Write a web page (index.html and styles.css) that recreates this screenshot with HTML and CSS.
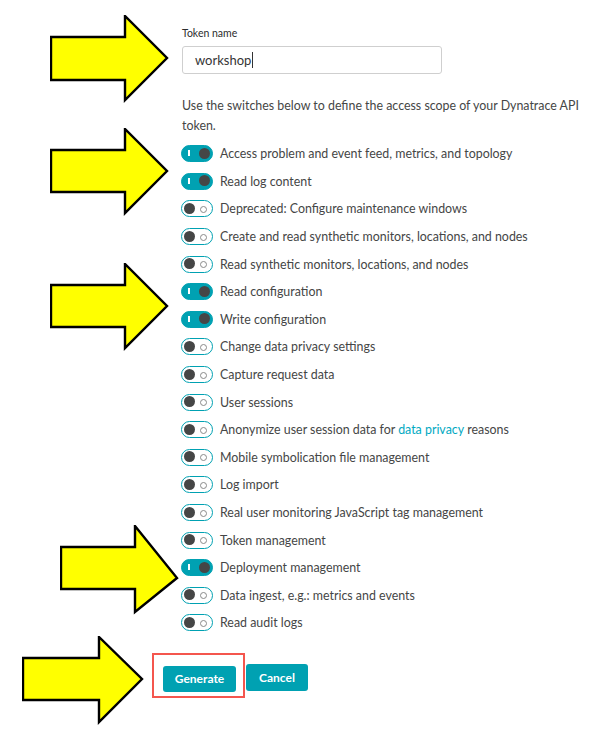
FILE: index.html
```html
<!DOCTYPE html>
<html>
<head>
<meta charset="utf-8">
<link rel="stylesheet" href="styles.css">
</head>
<body>
<div class="page">
  <div class="form">
    <label class="label">Token name</label>
    <div class="input">workshop<span class="caret"></span></div>
    <p class="intro">Use the switches below to define the access scope of your Dynatrace API token.</p>
    <ul class="scopes">
      <li><span class="toggle on"></span>Access problem and event feed, metrics, and topology</li>
      <li><span class="toggle on"></span>Read log content</li>
      <li><span class="toggle"></span>Deprecated: Configure maintenance windows</li>
      <li><span class="toggle"></span>Create and read synthetic monitors, locations, and nodes</li>
      <li><span class="toggle"></span>Read synthetic monitors, locations, and nodes</li>
      <li><span class="toggle on"></span>Read configuration</li>
      <li><span class="toggle on"></span>Write configuration</li>
      <li><span class="toggle"></span>Change data privacy settings</li>
      <li><span class="toggle"></span>Capture request data</li>
      <li><span class="toggle"></span>User sessions</li>
      <li><span class="toggle"></span>Anonymize user session data for&nbsp;<a class="link">data privacy</a>&nbsp;reasons</li>
      <li><span class="toggle"></span>Mobile symbolication file management</li>
      <li><span class="toggle"></span>Log import</li>
      <li><span class="toggle"></span>Real user monitoring JavaScript tag management</li>
      <li><span class="toggle"></span>Token management</li>
      <li><span class="toggle on"></span>Deployment management</li>
      <li><span class="toggle"></span>Data ingest, e.g.: metrics and events</li>
      <li><span class="toggle"></span>Read audit logs</li>
    </ul>
    <div class="actions">
      <div class="highlight"><button class="btn">Generate</button></div>
      <button class="btn cancel">Cancel</button>
    </div>
  </div>

  <svg class="arrow a1" width="120" height="88" viewBox="0 0 120 88"><polygon points="1,22 75,22 75,1 117,43 75,85 75,65 1,65" /></svg>
  <svg class="arrow a2" width="120" height="88" viewBox="0 0 120 88"><polygon points="1,22 75,22 75,1 117,43 75,85 75,64 1,64" /></svg>
  <svg class="arrow a3" width="120" height="88" viewBox="0 0 120 88"><polygon points="1,22 75,22 75,1 117,43 75,85 75,64 1,64" /></svg>
  <svg class="arrow a4" width="120" height="90" viewBox="0 0 120 90"><polygon points="1,22 75,22 75,1 117,53 75,87 75,64 1,64" /></svg>
  <svg class="arrow a5" width="122" height="90" viewBox="0 0 122 90"><polygon points="1,22 77,22 77,1 120,43 77,86 77,64 1,64" /></svg>
</div>
</body>
</html>
```
FILE: styles.css
```css
* { box-sizing: border-box; }
html, body { margin: 0; padding: 0; background: #fff; }
body {
  font-family: Lato, "Open Sans", "DejaVu Sans", sans-serif;
  color: #454646;
  width: 600px;
  height: 741px;
  overflow: hidden;
}
.page { position: relative; width: 600px; height: 741px; }
.form {
  padding: 26px 0 0 182px;
  display: flex;
  flex-direction: column;
}
.label {
  font-size: 10.5px;
  line-height: 14px;
  color: #2c2d2d;
}
.input {
  margin-top: 6px;
  width: 260px;
  height: 28px;
  border: 1px solid #cfcfcf;
  border-radius: 3px;
  padding-left: 12px;
  font-size: 13px;
  line-height: 26px;
  color: #353535;
  display: flex;
  align-items: center;
}
.caret {
  display: inline-block;
  width: 1px;
  height: 16px;
  background: #333;
  margin-left: 1px;
}
.intro {
  margin: 22px 0 0;
  width: 410px;
  font-size: 12.4px;
  line-height: 20px;
}
.scopes {
  list-style: none;
  margin: 4px 0 0 -1px;
  padding: 0;
}
.scopes li {
  height: 27.6px;
  display: flex;
  align-items: center;
  font-size: 12.4px;
  white-space: nowrap;
}
.link { color: #00a9c2; }
.toggle {
  position: relative;
  width: 32px;
  height: 17px;
  border-radius: 9px;
  border: 1.5px solid #00a1b2;
  background: #fff;
  margin-right: 7px;
  flex: none;
}
.toggle::before {
  content: "";
  position: absolute;
  left: 2px;
  top: 1.5px;
  width: 11px;
  height: 11px;
  border-radius: 50%;
  background: #454646;
}
.toggle::after {
  content: "";
  position: absolute;
  right: 5px;
  top: 4.5px;
  width: 5px;
  height: 5px;
  border-radius: 50%;
  border: 1px solid #8a8a8a;
}
.toggle.on { background: #00a1b2; }
.toggle.on::before { left: auto; right: 2px; }
.toggle.on::after {
  right: auto;
  left: 6px;
  top: 4px;
  width: 1.5px;
  height: 6px;
  border: none;
  border-radius: 0;
  background: #fff;
}
.actions {
  margin-top: 16px;
  margin-left: -30px;
  display: flex;
  align-items: flex-start;
}
.highlight {
  border: 2px solid #f4564e;
  padding: 11px 7px 4px 9px;
}
.btn {
  font-family: inherit;
  font-size: 12px;
  font-weight: 700;
  color: #fff;
  background: #00a1b2;
  border: none;
  border-radius: 3px;
  height: 26px;
  width: 73px;
  padding: 0;
  cursor: pointer;
}
.cancel {
  width: 62px;
  height: 27px;
  margin-top: 11px;
  margin-left: 1px;
}
.arrow { position: absolute; }
.arrow polygon {
  fill: #ffff00;
  stroke: #000;
  stroke-width: 2.4;
  stroke-linejoin: miter;
}
.a1 { left: 50px; top: 15px; }
.a2 { left: 50px; top: 128px; }
.a3 { left: 50px; top: 263px; }
.a4 { left: 60px; top: 525px; }
.a5 { left: 22px; top: 636px; }
```
